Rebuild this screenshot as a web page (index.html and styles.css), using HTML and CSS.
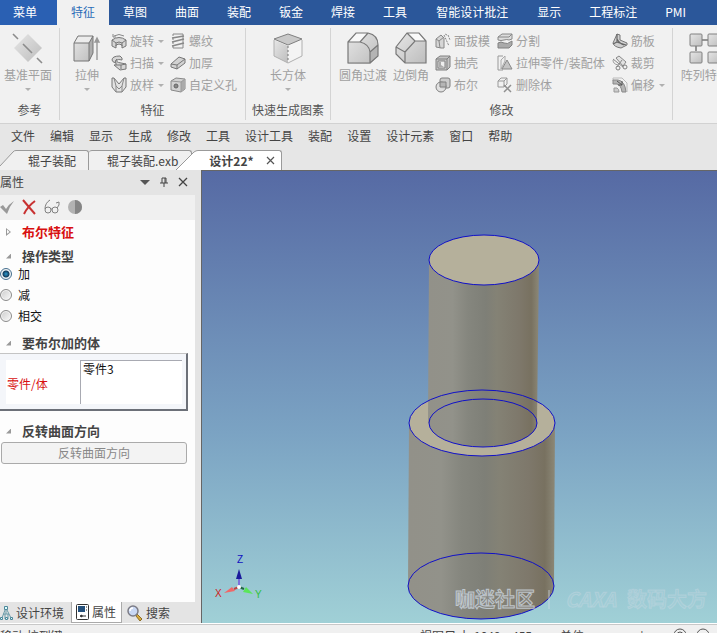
FILE: index.html
```
<!DOCTYPE html>
<html lang="zh-CN">
<head>
    <meta charset="UTF-8">
    <meta name="viewport" content="width=device-width, initial-scale=1.0">
    <title>设计22*</title>
    <link rel="stylesheet" href="styles.css">
</head>
<body>

    <!-- shared gradients -->
    <svg class="defs" width="0" height="0" aria-hidden="true">
        <defs>
            <linearGradient id="metal" x1="0" y1="0" x2="1" y2="1">
                <stop offset="0" stop-color="#e6e6e6"/>
                <stop offset="1" stop-color="#bdbdbd"/>
            </linearGradient>
        </defs>
    </svg>

    <nav class="ribbon-tabs">
        <button class="app-menu">菜单</button>
        <button class="active">特征</button>
        <button>草图</button>
        <button>曲面</button>
        <button>装配</button>
        <button>钣金</button>
        <button>焊接</button>
        <button>工具</button>
        <button class="wide">智能设计批注</button>
        <button>显示</button>
        <button>工程标注</button>
        <button>PMI</button>
    </nav>

    <div class="ribbon">
        <section class="group group-ref">
            <div class="tools">
                <button class="big">
                    <svg width="32" height="32" viewBox="0 0 32 32">
                        <path d="M16 2 30 16 16 30 2 16z" fill="url(#metal)"/>
                        <path d="M1 2l5 5M11 12l9 9M25 26l5 5" stroke="#8c8c8c" stroke-width="1.6"/>
                    </svg>
                    <span>基准平面</span>
                    <i class="arrow"></i>
                </button>
            </div>
            <h3>参考</h3>
        </section>

        <section class="group group-feature">
            <div class="tools">
                <button class="big narrow">
                    <svg width="32" height="32" viewBox="0 0 32 32">
                        <path d="M3 11 7 4h15v17l-4 8H3z" fill="url(#metal)"/>
                        <path d="M3 11 7 4h15l-4 7z" fill="#ececec"/>
                        <path d="M18 11l4-7v17l-4 8z" fill="#adadad"/>
                        <path d="M3 11 7 4h15v17l-4 8H3zM3 11h15v18M18 11l4-7" fill="none" stroke="#777"/>
                        <path d="M26 28V7M24 10l2-4 2 4z" fill="#999" stroke="#999" stroke-width="1.4"/>
                    </svg>
                    <span>拉伸</span>
                    <i class="arrow"></i>
                </button>
                <div class="column">
                    <button class="small">
                        <svg width="16" height="16" viewBox="0 0 16 16">
                            <path d="M1 7q7-5 14 0v6l-4 2v-3q-3-2-6 0v3l-4-2z" fill="#d6d6d6" stroke="#777"/>
                            <path d="M1 7l4 3q3-2 6 0l4-3M5 10v3M11 10v3" fill="none" stroke="#777"/>
                            <path d="M3 3q5-3 10 0M2 1v3h3" fill="none" stroke="#888"/>
                        </svg>
                        <span>旋转</span><i class="arrow"></i>
                    </button>
                    <button class="small">
                        <svg width="16" height="16" viewBox="0 0 16 16">
                            <path d="M9 1Q1 1 1 5q0 2 4 3v2H3l6 5 6-1V9l-5-1q-6-1-4-3 1-1 5 0V3z" fill="#d6d6d6" stroke="#777"/>
                            <path d="M5 10h5l5-1M10 10v4M5 8q-2-2 1-4" fill="none" stroke="#777"/>
                        </svg>
                        <span>扫描</span><i class="arrow"></i>
                    </button>
                    <button class="small">
                        <svg width="16" height="16" viewBox="0 0 16 16">
                            <path d="M1 1h2l5 6 5-6h2v9l-4 5H5l-4-5z" fill="#e2e2e2" stroke="#777"/>
                            <path d="M3 1l2 8 3 3 3-3 2-8M5 9v6M11 9v6" fill="none" stroke="#888"/>
                        </svg>
                        <span>放样</span><i class="arrow"></i>
                    </button>
                </div>
                <div class="column">
                    <button class="small">
                        <svg width="16" height="16" viewBox="0 0 16 16">
                            <path d="M3 3V1h10v14H3v-2M3 5v2M3 9v2" fill="none" stroke="#888"/>
                            <path d="M2 5l12-2M2 9l12-3M2 13l12-3" stroke="#888" stroke-width="1.6"/>
                        </svg>
                        <span>螺纹</span>
                    </button>
                    <button class="small">
                        <svg width="16" height="16" viewBox="0 0 16 16">
                            <path d="M1 9l8-7 6 2v4l-8 6-6-2z" fill="#d2d2d2" stroke="#777"/>
                            <path d="M1 9l6 1 8-6M7 10v4" fill="none" stroke="#777"/>
                        </svg>
                        <span>加厚</span>
                    </button>
                    <button class="small">
                        <svg width="16" height="16" viewBox="0 0 16 16">
                            <path d="M1 4l5-3 9 1v10l-4 3-10-2z" fill="#d2d2d2" stroke="#888"/>
                            <path d="M11 5l4-3v10l-4 3z" fill="#aaa"/>
                            <path d="M1 4l10 1v10M11 5l4-3" fill="none" stroke="#999"/>
                            <circle cx="6" cy="9" r="2" fill="#888" stroke="#666"/>
                        </svg>
                        <span>自定义孔</span>
                    </button>
                </div>
            </div>
            <h3>特征</h3>
        </section>

        <section class="group group-quick">
            <div class="tools">
                <button class="big">
                    <svg width="32" height="32" viewBox="0 0 32 32">
                        <path d="M2 8l14 6v17L2 24z" fill="url(#metal)"/>
                        <path d="M30 8l-14 6v17l14-7z" fill="#f4f4f4"/>
                        <path d="M16 2l14 5-14 6L2 7z" fill="#c9c9c9" stroke="#808080"/>
                        <path d="M2 8v16l14 7 14-7V8" fill="none" stroke="#b0b0b0"/>
                        <path d="M16 14v16" stroke="#777" stroke-dasharray="2 2"/>
                    </svg>
                    <span>长方体</span>
                    <i class="arrow"></i>
                </button>
            </div>
            <h3>快速生成图素</h3>
        </section>

        <section class="group group-modify">
            <div class="tools">
                <button class="big">
                    <svg width="32" height="32" viewBox="0 0 32 32">
                        <path d="M1 10 9 1h12q10 2 10 12v11l-8 8H1z" fill="url(#metal)"/>
                        <path d="M1 10 9 1h12l-8 9z" fill="#f8f8f8"/>
                        <path d="M23 20l8-7v11l-8 8z" fill="#b4b4b4"/>
                        <path d="M1 10 9 1h12q10 2 10 12v11l-8 7H1zM1 10h12q9 2 10 10v11M13 10l8-9M23 20l8-7" fill="none" stroke="#777" stroke-width="1.2"/>
                    </svg>
                    <span>圆角过渡</span>
                </button>
                <button class="big">
                    <svg width="32" height="32" viewBox="0 0 32 32">
                        <path d="M1 15 12 1h12l7 8v22H10l-9-9z" fill="url(#metal)"/>
                        <path d="M12 1h12l7 8H20z" fill="#fafafa"/>
                        <path d="M1 15 12 1h12l7 8v22H10l-9-9zM1 15l9 5v11M10 20 20 9h11M12 1l8 8" fill="none" stroke="#777" stroke-width="1.2"/>
                    </svg>
                    <span>边倒角</span>
                </button>
                <div class="column">
                    <button class="small">
                        <svg width="16" height="16" viewBox="0 0 16 16">
                            <path d="M1 6l5-4 3 3v10H6l-5-1z" fill="#d6d6d6" stroke="#888"/>
                            <path d="M1 6l3 2 1 7M4 8l5-4" fill="none" stroke="#888"/>
                            <path d="M9 2l5 11M13 2l2 5M12 2l-2-1" fill="none" stroke="#888" stroke-dasharray="2 1"/>
                        </svg>
                        <span>面拔模</span>
                    </button>
                    <button class="small">
                        <svg width="16" height="16" viewBox="0 0 16 16">
                            <path d="M1 4l4-3h10v11l-3 3H1z" fill="#c4c4c4" stroke="#808080"/>
                            <path d="M1 4h11v11M12 4l3-3" fill="none" stroke="#808080"/>
                            <path d="M3 6h7v7H3z" fill="#eee" stroke="#808080"/>
                            <path d="M4 7h2v3l3 2H4z" fill="#aaa"/>
                        </svg>
                        <span>抽壳</span>
                    </button>
                    <button class="small">
                        <svg width="16" height="16" viewBox="0 0 16 16">
                            <path d="M5 3q0-2 2-2h6q2 0 2 2v6q0 2-2 2H7q-2 0-2-2z" fill="#ccc" stroke="#808080"/>
                            <circle cx="6" cy="10" r="5" fill="#ddd" fill-opacity=".8" stroke="#808080"/>
                            <path d="M5 10V5h6v5z" fill="#b5b5b5" stroke="#808080"/>
                        </svg>
                        <span>布尔</span>
                    </button>
                </div>
                <div class="column">
                    <button class="small">
                        <svg width="16" height="16" viewBox="0 0 16 16">
                            <path d="M1 4l4-3h10v5l-3 1q-2-1-5 0t-6 0z" fill="#ddd" stroke="#888"/>
                            <path d="M1 4h11l3-3" fill="none" stroke="#888"/>
                            <path d="M1 10q3-2 6 0t8-2v4l-3 3H1z" fill="#aaa" stroke="#808080"/>
                        </svg>
                        <span>分割</span>
                    </button>
                    <button class="small">
                        <svg width="16" height="16" viewBox="0 0 16 16">
                            <path d="M6 1H1v14h5" fill="none" stroke="#999"/>
                            <path d="M4 14V5l4-4v5z" fill="#eee" stroke="#aaa"/>
                            <path d="M5 14l5-9 5 9z" fill="#c4c4c4" stroke="#888"/>
                        </svg>
                        <span>拉伸零件/装配体</span>
                    </button>
                    <button class="small">
                        <svg width="16" height="16" viewBox="0 0 16 16">
                            <path d="M1 4l3-3h6v6l-3 3H1zM1 4h6v6M7 4l3-3" fill="none" stroke="#999"/>
                            <path d="M7 8l7 7M14 8l-7 7" stroke="#909090" stroke-width="1.5"/>
                        </svg>
                        <span>删除体</span>
                    </button>
                </div>
                <div class="column">
                    <button class="small">
                        <svg width="16" height="16" viewBox="0 0 16 16">
                            <path d="M1 10l4-9 3 1v5l7 3v2l-6 3q-7-1-8-5z" fill="#d0d0d0" stroke="#777"/>
                            <path d="M5 1v8l9 3M5 9l-4 2M5 6q3 5 7 6" fill="none" stroke="#666" stroke-width="1.2"/>
                        </svg>
                        <span>筋板</span>
                    </button>
                    <button class="small">
                        <svg width="16" height="16" viewBox="0 0 16 16">
                            <path d="M4 3l3-2 7 6-3 4z" fill="#e2e2e2" stroke="#888"/>
                            <path d="M1 4l10 8M10 5l-5 7" stroke="#888"/>
                            <circle cx="13" cy="12" r="2" fill="none" stroke="#808080"/>
                            <circle cx="6" cy="13" r="2" fill="none" stroke="#808080"/>
                            <path d="M1 5q0 4 5 5" fill="none" stroke="#999"/>
                        </svg>
                        <span>裁剪</span>
                    </button>
                    <button class="small">
                        <svg width="16" height="16" viewBox="0 0 16 16">
                            <path d="M1 4V1h9l5 5v9" fill="none" stroke="#bbb"/>
                            <path d="M1 3h5q7 1 8 12h-4Q9 8 5 7H1z" fill="#b5b5b5" stroke="#888"/>
                            <path d="M2 15v-4h3q2 1 2 4z" fill="#ccc" stroke="#999"/>
                            <path d="M5 4l5 4M10 4v4H6" fill="none" stroke="#555"/>
                        </svg>
                        <span>偏移</span><i class="arrow"></i>
                    </button>
                </div>
            </div>
            <h3>修改</h3>
        </section>

        <section class="group group-pattern">
            <div class="tools">
                <button class="big">
                    <svg width="32" height="32" viewBox="0 0 32 32">
                        <path d="M13 8h6M7 14v5" stroke="#777" stroke-width="1.5"/>
                        <g fill="url(#metal)" stroke="#808080">
                            <rect x="1" y="2" width="12" height="12" rx="1"/>
                            <rect x="19" y="2" width="12" height="12" rx="1"/>
                            <rect x="1" y="20" width="12" height="11" rx="1"/>
                            <rect x="19" y="20" width="12" height="11" rx="1"/>
                        </g>
                    </svg>
                    <span>阵列特征</span>
                </button>
            </div>
        </section>
    </div>

    <nav class="menu-bar">
        <button>文件</button>
        <button>编辑</button>
        <button>显示</button>
        <button>生成</button>
        <button>修改</button>
        <button>工具</button>
        <button>设计工具</button>
        <button>装配</button>
        <button>设置</button>
        <button>设计元素</button>
        <button>窗口</button>
        <button>帮助</button>
    </nav>

    <div class="doc-tabs">
        <svg class="slant" width="16" height="20" viewBox="0 0 16 20">
            <path d="M0 16 13 2Q14 .5 16 .5V20H0z" fill="#f0f0f0"/>
            <path d="M0 16 13 2Q14 .5 16 .5" fill="none" stroke="#9a9a9a"/>
        </svg>
        <button class="doc first">辊子装配</button>
        <button class="doc second">辊子装配.exb</button>
        <svg class="slant over" width="22" height="20" viewBox="0 0 22 20">
            <path d="M0 20 18 2Q20 .5 22 .5V20z" fill="#fff"/>
            <path d="M0 20 18 2Q20 .5 22 .5" fill="none" stroke="#9a9a9a"/>
        </svg>
        <div class="doc current">
            <button>设计22*</button>
            <button class="close" aria-label="关闭">
                <svg width="9" height="9" viewBox="0 0 9 9"><path d="M1 1l7 7M8 1l-7 7" stroke="#555" stroke-width="1.2"/></svg>
            </button>
        </div>
    </div>

    <div class="workspace">
        <aside class="panel">
            <header class="panel-title">
                <span>属性</span>
                <button aria-label="选项"><svg width="10" height="10" viewBox="0 0 10 10"><path d="M0 3h10L5 8z" fill="#555"/></svg></button>
                <button aria-label="固定"><svg width="10" height="10" viewBox="0 0 10 10"><path d="M3 6V1h4v5M1 6h8M5 6v4" fill="none" stroke="#444"/><path d="M6 1v5" stroke="#444"/></svg></button>
                <button aria-label="关闭"><svg width="10" height="10" viewBox="0 0 10 10"><path d="M1 1l8 8M9 1 1 9" stroke="#444" stroke-width="1.3"/></svg></button>
            </header>

            <div class="panel-tools">
                <button aria-label="确定"><svg width="16" height="16" viewBox="0 0 16 16"><path d="M0 8l3-2 3 4q3-5 8-8-5 6-7 13z" fill="#999"/></svg></button>
                <button aria-label="取消"><svg width="16" height="16" viewBox="0 0 16 16"><path d="M2 1q5 6 12 14M14 2Q7 7 3 15" fill="none" stroke="#c83232" stroke-width="2"/></svg></button>
                <button aria-label="预览"><svg width="16" height="16" viewBox="0 0 16 16"><g fill="none" stroke="#808080"><circle cx="4" cy="11" r="3"/><circle cx="11" cy="11" r="3"/><path d="M1 10Q1 4 6 1M7 10h1M13 9q3-3 2-6l-3 1"/></g></svg></button>
                <button aria-label="显示"><svg width="16" height="16" viewBox="0 0 16 16"><circle cx="8" cy="8" r="7" fill="#b2b2b2"/><path d="M8 1a7 7 0 0 1 0 14z" fill="#858585"/></svg></button>
            </div>

            <div class="properties">
                <h4 class="required"><i class="twist closed"></i>布尔特征</h4>

                <h4><i class="twist"></i>操作类型</h4>
                <div class="options">
                    <label><input type="radio" name="op" checked>加</label>
                    <label><input type="radio" name="op">减</label>
                    <label><input type="radio" name="op">相交</label>
                </div>

                <h4 class="list-title"><i class="twist"></i>要布尔加的体</h4>
                <div class="body-list">
                    <label for="bodies">零件/体</label>
                    <textarea id="bodies" readonly>零件3</textarea>
                </div>

                <h4 class="spaced"><i class="twist"></i>反转曲面方向</h4>
                <button class="flip" disabled>反转曲面方向</button>
            </div>

            <nav class="panel-tabs">
                <button>
                    <svg width="13" height="16" viewBox="0 0 13 16"><path d="M5 5 2 13M7 5l4 8M6 5v4M3 9h6M5 9v5M8 9v5" stroke="#6a9aa8" fill="none"/><g fill="#dff" stroke="#4d879a"><path d="M4.500 1.500h3v3h-3zM.5 12.500h2v2h-2zM5.500 12.500h2v2h-2zM10.500 12.500h2v2h-2z"/></g></svg>
                    设计环境
                </button>
                <button class="active">
                    <svg width="13" height="16" viewBox="0 0 13 16"><rect x=".5" y=".5" width="12" height="15" rx="1" fill="#fff" stroke="#333"/><path d="M2 2h7v6H2z" fill="#24507c"/><path d="M10 3h1M10 6h1M4 12l2-1v2zM5 12h5" fill="#333" stroke="#333"/></svg>
                    属性
                </button>
                <button>
                    <svg width="16" height="16" viewBox="0 0 16 16"><path d="M10 9l5 5-2 2-4-5z" fill="#d8aa3c" stroke="#8c6d25"/><circle cx="6" cy="6" r="5" fill="#c9d8f4" stroke="#7c7c86" stroke-width="1.5"/><path d="M3 6q0-3 3-3" fill="none" stroke="#fff" stroke-width="1.5"/></svg>
                    搜索
                </button>
            </nav>
        </aside>

        <main class="viewport">
            <svg class="scene" viewBox="202 171 515 452" preserveAspectRatio="xMidYMid slice">
                <defs>
                    <linearGradient id="shaft" gradientUnits="userSpaceOnUse" x1="409" y1="0" x2="555" y2="0">
                        <stop offset="0" stop-color="#929189"/>
                        <stop offset=".22" stop-color="#92928a"/>
                        <stop offset=".36" stop-color="#85867e"/>
                        <stop offset=".52" stop-color="#7e7f77"/>
                        <stop offset=".62" stop-color="#848275"/>
                        <stop offset=".82" stop-color="#7e786b"/>
                        <stop offset=".93" stop-color="#787160"/>
                        <stop offset="1" stop-color="#8c8877"/>
                    </linearGradient>
                    <linearGradient id="pin" gradientUnits="userSpaceOnUse" x1="428" y1="0" x2="539" y2="0">
                        <stop offset="0" stop-color="#929189"/>
                        <stop offset=".22" stop-color="#92928a"/>
                        <stop offset=".36" stop-color="#85867e"/>
                        <stop offset=".52" stop-color="#7e7f77"/>
                        <stop offset=".62" stop-color="#848275"/>
                        <stop offset=".82" stop-color="#7e786b"/>
                        <stop offset=".93" stop-color="#787160"/>
                        <stop offset="1" stop-color="#8c8877"/>
                    </linearGradient>
                </defs>

                <!-- lower cylinder -->
                <path d="M409 423h146l-1 163H408z" fill="url(#shaft)"/>
                <ellipse cx="481" cy="586" rx="73" ry="33" fill="url(#shaft)"/>
                <ellipse cx="482" cy="423" rx="73" ry="33" fill="#b5b09b"/>
                <!-- upper cylinder -->
                <path d="M429 260h110l-2 163H428z" fill="url(#pin)"/>
                <ellipse cx="483" cy="423" rx="54" ry="24" fill="url(#pin)"/>
                <ellipse cx="484" cy="260" rx="55" ry="25" fill="#b5b09b"/>

                <g class="edges">
                    <ellipse cx="484" cy="260" rx="55" ry="25"/>
                    <ellipse cx="482" cy="423" rx="73" ry="33"/>
                    <ellipse cx="483" cy="423" rx="54" ry="24"/>
                    <ellipse cx="481" cy="586" rx="73" ry="33"/>
                </g>

                <!-- axis triad -->
                <path d="M239 587v-8" stroke="#7b70dc" stroke-width="2"/>
                <path d="M239 569l3 10h-6z" fill="#1a1a9c"/>
                <path d="M239 587l-5 2" stroke="#b44" stroke-width="2"/>
                <path d="M224 593l8-6 3 4z" fill="#f06868"/>
                <path d="M239 587l5 2" stroke="#264" stroke-width="2"/>
                <path d="M253 594l-10-2 3-5z" fill="#5ae65a"/>
                <circle cx="239" cy="587" r="2" fill="#fff"/>
                <text class="axis" x="237" y="563" fill="#1010c0">Z</text>
                <text class="axis" x="215" y="597" fill="#d02020">X</text>
                <text class="axis" x="255" y="598" fill="#30c040">Y</text>

                <g class="watermark">
                    <text x="455" y="607">咖迷社区</text>
                    <path d="M549 590v19"/>
                    <text class="faint slanted" x="565" y="607">CAXA</text>
                    <text class="faint" x="627" y="607">数码大方</text>
                </g>
            </svg>
        </main>
    </div>

    <footer class="status-bar">
        <span class="hint">移动 拉到键</span>
        <span>视图尺寸: 1049 x 455</span>
        <span>单位: mm</span>
        <span>|</span>
        <svg width="40" height="14" viewBox="0 0 40 14"><g fill="none" stroke="#555"><circle cx="8" cy="7" r="6"/><circle cx="8" cy="7" r="3"/><circle cx="31" cy="7" r="6"/></g></svg>
    </footer>

</body>
</html>
```
FILE: styles.css
```
* {
    box-sizing: border-box;
}
body {
    margin: 0;
    height: 100vh;
    display: flex;
    flex-direction: column;
    overflow: hidden;
    background: #e6e6e6;
    color: #444;
    font: 12px/16px "Noto Sans CJK SC", sans-serif;
}
button {
    padding: 0;
    border: none;
    background: none;
    color: inherit;
    font: inherit;
    white-space: nowrap;
    flex: none;
}
svg {
    flex: none;
    display: block;
}
h3, h4 {
    margin: 0;
    font-weight: normal;
}
.defs {
    position: absolute;
}

/* ribbon tabs */
.ribbon-tabs {
    display: flex;
    flex: none;
    height: 25px;
    padding-bottom: 1px;
    background: #2b579a;
    color: #fff;
    overflow: hidden;
}
.ribbon-tabs button {
    height: 25px;
    padding: 0 14px 2px;
}
.ribbon-tabs .app-menu {
    padding: 0 20px 2px 13px;
    background: #2a60b3;
}
.ribbon-tabs .active {
    background: #f1f1f1;
    color: #2b6cb8;
}
.ribbon-tabs .wide {
    padding: 0 15px 2px;
}

/* ribbon */
.ribbon {
    display: flex;
    flex: none;
    height: 99px;
    padding-top: 3px;
    background: #f1f1f1;
    border-bottom: 1px solid #d2d2d2;
    overflow: hidden;
}
.group {
    display: flex;
    flex: none;
    flex-direction: column;
    justify-content: space-between;
    height: 92px;
    padding-bottom: 2px;
    border-right: 1px solid #d4d4d4;
    color: #a0a0a0;
}
.group h3 {
    font-size: 12px;
    line-height: 16px;
    text-align: center;
    color: #555;
}
.tools {
    display: flex;
    height: 68px;
}
.group-ref .tools {
    padding: 0 7px 0 4px;
}
.group-feature .tools {
    padding: 0 8px 0 12px;
}
.group-quick {
    padding: 0 6px 2px;
}
.group-quick .tools {
    justify-content: center;
}
.group-modify .tools {
    padding: 0 7px 0 8px;
}
.group-modify .big {
    margin-right: 6px;
}
.group-pattern {
    border: none;
    padding-left: 8px;
}
.big {
    display: flex;
    flex-direction: column;
    align-items: center;
    padding-top: 4px;
}
.big span {
    margin-top: 3px;
}
.narrow {
    width: 30px;
    margin-right: 9px;
}
.arrow {
    border: 3px solid transparent;
    border-top-color: #b0b0b0;
    border-bottom: none;
}
.big .arrow {
    margin-top: 5px;
}
.column {
    display: flex;
    flex-direction: column;
    gap: 6px;
    padding-top: 5px;
}
.column + .column {
    margin-left: 7px;
}
.group-feature .column + .column {
    margin-left: 6px;
}
.small {
    display: flex;
    align-items: center;
    gap: 3px;
}
.small .arrow {
    margin-left: 1px;
}

/* menu bar */
.menu-bar {
    display: flex;
    flex: none;
    gap: 15px;
    height: 26px;
    padding: 0 11px 3px;
}

/* document tabs */
.doc-tabs {
    display: flex;
    flex: none;
    height: 20px;
}
.doc {
    height: 20px;
    background: #f0f0f0;
    border-top: 1px solid #9a9a9a;
    border-right: 1px solid #9a9a9a;
    border-radius: 0 3px 0 0;
}
.first {
    padding: 0 12px;
}
.second {
    padding: 0 13px 0 18px;
    border-radius: 3px 3px 0 0;
}
.over {
    margin-left: -16px;
}
.current {
    display: flex;
    align-items: center;
    gap: 12px;
    padding: 0 6px 0 11px;
    background: #fff;
    font-weight: bold;
}

/* workspace */
.workspace {
    display: flex;
    flex: 1;
    min-height: 0;
}
.panel {
    display: flex;
    flex-direction: column;
    flex: none;
    width: 201px;
    padding-right: 6px;
    background: #e4e4e4;
}
.panel-title {
    display: flex;
    flex: none;
    align-items: center;
    gap: 9px;
    height: 25px;
    padding: 0 7px 1px 0;
}
.panel-title span {
    flex: 1;
}
.panel-tools {
    display: flex;
    flex: none;
    align-items: center;
    gap: 7px;
    height: 25px;
    padding-bottom: 2px;
    background: #f0f0f0;
}
.panel-tools button:first-child {
    margin-right: -2px;
}
.properties {
    flex: 1;
    min-height: 0;
    padding-top: 2px;
    background: #fdfdfd;
    overflow: hidden;
}
.properties h4 {
    display: flex;
    align-items: center;
    height: 20px;
    margin-bottom: 4px;
    font-size: 13px;
    font-weight: bold;
}
.properties h4.required {
    color: #d81010;
}
.properties h4.list-title {
    margin-bottom: 0;
}
.twist {
    width: 5px;
    height: 5px;
    margin: 0 11px 0 6px;
    background: #999;
    clip-path: polygon(100% 0, 100% 100%, 0 100%);
}
.twist.closed {
    height: 8px;
    clip-path: polygon(0 0, 100% 50%, 0 100%, 0 80%, 70% 50%, 20% 20%, 20% 80%, 0 100%);
}
.options {
    margin: -7px 0 7px;
}
.options label {
    display: flex;
    align-items: center;
    gap: 6px;
    height: 21px;
    margin-right: 6px;
    color: #111;
}
.options input {
    appearance: none;
    width: 12px;
    height: 12px;
    margin: 0;
    border: 1px solid #8c8c8c;
    border-radius: 50%;
    background: linear-gradient(135deg, #ccc, #fafafa);
    box-shadow: inset 0 0 0 1px #f4f4f4;
}
.options input:checked {
    border-color: #456f8f;
    background: radial-gradient(#2c9bd0 0, #123c5c 3px, #e4eef4 4px);
}
.body-list {
    display: flex;
    height: 58px;
    margin-right: 7px;
    padding: 6px 4px 5px 6px;
    background: #f4f6fa;
    border: solid #6c7078;
    border-width: 1px 2px 2px 0;
    border-top-color: #c4c4c4;
}
.body-list label {
    display: flex;
    align-items: center;
    width: 74px;
    padding: 4px 0 0 1px;
    background: #fff;
    color: #d81010;
}
.body-list textarea {
    flex: 1;
    min-width: 0;
    padding: 0 2px;
    border: solid #a8aab2;
    border-width: 1px 0 0 1px;
    background: #fff;
    color: #111;
    font: inherit;
    resize: none;
}
.properties .spaced {
    margin: 10px 0 1px;
}
.flip {
    display: block;
    width: 186px;
    height: 22px;
    margin-left: 1px;
    background: #f3f3f3;
    border: 1px solid #aaa;
    border-radius: 3px;
    color: #888;
}

/* panel tabs */
.panel-tabs {
    display: flex;
    flex: none;
    height: 21px;
}
.panel-tabs button {
    display: flex;
    align-items: center;
    gap: 3px;
    padding-right: 7px;
}
.panel-tabs .active {
    padding: 0 5px 0 4px;
    background: #fff;
    border: solid #aaa;
    border-width: 0 1px 1px;
    margin-right: 5px;
}

/* 3D view */
.viewport {
    flex: 1;
    min-width: 0;
    border: solid #666;
    border-width: 1px 0 0 1px;
    background: linear-gradient(#566aa4, #7ba3c3 58%, #a0d0d6);
}
.scene {
    width: 100%;
    height: 100%;
}
.edges {
    fill: none;
    stroke: #1010c8;
    stroke-width: 1;
}
.axis {
    font: 10px "Liberation Sans", sans-serif;
}
.watermark {
    fill: #d2dce6;
    fill-opacity: .15;
    stroke: #d2dce6;
    stroke-opacity: .75;
    font-size: 20px;
    font-weight: bold;
}
.watermark .faint {
    stroke-opacity: .35;
}
.watermark .slanted {
    font-style: italic;
}

/* status bar */
.status-bar {
    display: flex;
    flex: none;
    gap: 28px;
    height: 10px;
    padding-top: 4px;
    background: #f0f0f0;
    border-top: 1px solid #fff;
    box-shadow: inset 0 1px #c8c8c8;
    overflow: hidden;
    white-space: nowrap;
}
.status-bar .hint {
    flex: none;
    width: 392px;
}
```
